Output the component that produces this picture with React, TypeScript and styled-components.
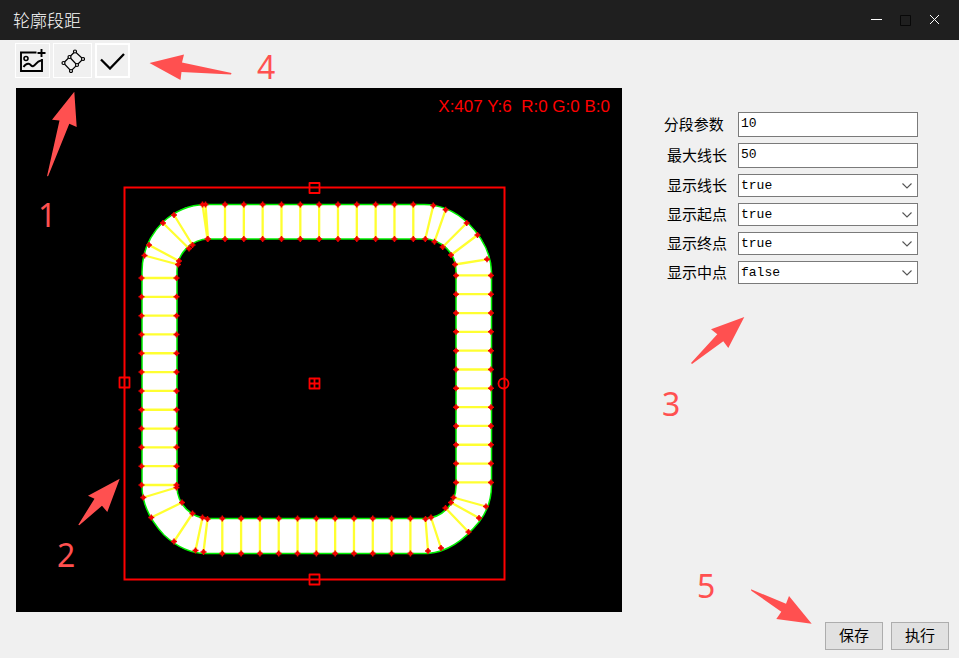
import React from "react";
import styled, { createGlobalStyle } from "styled-components";

const cjk = `"Noto Sans CJK SC", sans-serif`;
const mono = `"Liberation Mono", "Noto Sans CJK SC", monospace`;

const GlobalStyle = createGlobalStyle`
  * { box-sizing: border-box; }
  body { margin: 0; background: #f0f0f0; font-family: ${cjk}; }
`;

const Window = styled.div`
  display: flex;
  flex-direction: column;
  min-height: 100vh;
  background: #f0f0f0;
`;

const TitleBar = styled.header`
  display: flex;
  align-items: center;
  justify-content: space-between;
  height: 40px;
  padding: 0 10px 0 13px;
  background: #1f1f1f;
  color: #fff;
`;

const Title = styled.h1`
  margin: 0;
  font-size: 17px;
  line-height: 24px;
  font-weight: 300;
`;

const WindowButtons = styled.div`
  display: flex;
`;

const WindowButton = styled.button<{ $dim?: boolean }>`
  display: grid;
  place-items: center;
  width: 29px;
  height: 40px;
  padding: 0;
  border: 0;
  background: transparent;
  color: ${(p) => (p.$dim ? "#080808" : "#fff")};
`;

const Toolbar = styled.div`
  position: relative;
  display: flex;
  gap: 3px;
  height: 48px;
  padding: 3px 15px;
`;

const ToolButton = styled.button<{ $wide?: boolean; $active?: boolean }>`
  display: grid;
  place-items: center;
  width: ${(p) => (p.$wide ? 39 : 35)}px;
  height: 35px;
  padding: 0;
  border: ${(p) => (p.$active ? 2 : 1)}px solid #fff;
  background: #f0f0f0;
  color: #000;
`;

const Workspace = styled.main`
  display: grid;
  grid-template-columns: minmax(0, 1fr) 337px;
  flex: 1;
  padding-left: 16px;
`;

const Stage = styled.section`
  position: relative;
  align-self: start;
  background: #000;
`;

const Drawing = styled.svg`
  display: block;
  width: 100%;
  height: auto;
`;

const PixelInfo = styled.output`
  position: absolute;
  top: 8px;
  right: 12px;
  color: #f00;
  font: 17px/22px "Liberation Sans", sans-serif;
  white-space: pre;
`;

const SidePanel = styled.aside`
  position: relative;
  display: flex;
  flex-direction: column;
  justify-content: space-between;
  padding: 24px 10px 8px 16px;
`;

const Form = styled.form`
  display: grid;
  gap: 6px;
  padding-right: 31px;
`;

const Field = styled.div`
  display: grid;
  grid-template-columns: 1fr 180px;
  column-gap: 11px;
  align-items: center;
`;

const Label = styled.label`
  padding-bottom: 2px;
  text-align: right;
  font-size: 15px;
  line-height: 20px;
  white-space: pre;
  color: #000;
`;

const TextBox = styled.input`
  width: 100%;
  height: 25px;
  padding: 0 2px 2px;
  border: 1px solid #7a7a7a;
  background: #fff;
  color: #000;
  font: 13px/20px ${mono};
`;

const SelectBox = styled.div`
  display: grid;
  align-items: center;
  color: #555;
  & > * { grid-area: 1 / 1; }
  & > svg { justify-self: end; margin-right: 6px; pointer-events: none; }
`;

const Select = styled.select`
  appearance: none;
  width: 100%;
  height: 23px;
  padding: 0 20px 0 2px;
  border: 1px solid #7a7a7a;
  border-radius: 0;
  background: #fff;
  color: #000;
  font: 13px/20px ${mono};
`;

const Actions = styled.div`
  display: flex;
  justify-content: flex-end;
  gap: 8px;
`;

const ActionButton = styled.button`
  width: 58px;
  height: 28px;
  padding: 0 0 2px;
  border: 1px solid #adadad;
  background: #e1e1e1;
  color: #000;
  font: 15px/22px ${cjk};
`;

const CalloutSvg = styled.svg<{ $left: number; $top?: number; $bottom?: number }>`
  position: absolute;
  left: ${(p) => p.$left}px;
  ${(p) => (p.$top !== undefined ? `top: ${p.$top}px;` : `bottom: ${p.$bottom}px;`)}
  overflow: visible;
  pointer-events: none;
`;

const Digit = styled.text`
  fill: #ff5050;
  font: 32px "Noto Sans", sans-serif;
`;

type MarkProps = { n: number; x: number; y: number; points: string };

const Mark = ({ n, x, y, points }: MarkProps) => (
  <g>
    <polygon points={points} fill="#ff5050" />
    <Digit x={x} y={y}>{n}</Digit>
  </g>
);

type Segment = [number, number, number, number];

const range = (count: number, start: number, end: number) =>
  Array.from({ length: count }, (_, i) => start + ((end - start) * i) / (count - 1));

const segments: Segment[] = [
  ...range(11, 225, 413.3).map((x): Segment => [x, 204.5, x, 239]),
  ...range(11, 222.3, 410.4).map((x): Segment => [x, 518.5, x, 553.5]),
  ...range(12, 278, 485).map((y): Segment => [141.5, y, 176.5, y]),
  ...range(12, 275.4, 482.4).map((y): Segment => [456, y, 491, y]),
  [202.5, 204.5, 207.5, 239],
  [205.5, 204.5, 208, 239],
  [174, 215, 192.5, 245],
  [163, 223, 189, 248.5],
  [149, 245, 179, 261],
  [144.5, 255.5, 178, 264.5],
  [433.3, 205.5, 425.3, 239],
  [445.7, 209.7, 434.5, 241.7],
  [466.7, 223, 442.7, 247],
  [477.5, 235, 451, 255],
  [487, 259.3, 455, 264.5],
  [143.3, 497.5, 176.5, 487.5],
  [151.3, 517.5, 182, 502.5],
  [174, 541.5, 192.5, 513.5],
  [195.5, 550.5, 202.5, 517.5],
  [203.5, 552, 207.5, 519],
  [428, 551, 425.5, 519],
  [441, 548, 431, 517.5],
  [468.5, 532, 445.5, 508],
  [479, 518, 451, 502.5],
  [486, 506.5, 453.5, 497.5],
];

const crosses = segments
  .flatMap(([x1, y1, x2, y2]) => [[x1, y1], [x2, y2]])
  .map(([x, y]) => `M${x - 3} ${y}h6M${x} ${y - 3}v6M${x - 1} ${y - 1}h2v2h-2z`)
  .join("");

const outerEdge =
  "M205 204.5H424C440 204.5 455 211 468 223C482 237 491 252 491.5 272V485C491.500 500 487 512 479 522C466 538 448 552 428 553.500H206C190 553.500 177 547 164 535C150 520 142 505 142 486V272C142 250 150 235 163 222C175 211 188 205 205 204.500Z";

const Contour = () => (
  <Drawing viewBox="16 88 606 524" role="img" aria-label="轮廓段距">
    <path d={outerEdge} fill="#fff" stroke="#00f000" strokeWidth="1.5" />
    <rect x="177" y="239" width="279" height="279.5" rx="32" fill="#000" stroke="#00f000" strokeWidth="1.5" />
    <path d={segments.map(([a, b, c, d]) => `M${a} ${b}L${c} ${d}`).join("")} stroke="#ffff30" strokeWidth="2.3" />
    <path d={crosses} stroke="#f00000" strokeWidth="1.5" fill="#f00" />
    <g fill="none" stroke="#f00" strokeWidth="2">
      <rect x="124.5" y="187.5" width="380" height="392" />
      <g strokeWidth="1.8" strokeLinejoin="round">
        <rect x="309.5" y="183" width="10" height="10" />
        <rect x="309.5" y="574.5" width="10" height="10" />
        <rect x="119.5" y="377.5" width="10" height="10" />
        <circle cx="503.5" cy="383.5" r="5" />
        <path d="M309.5 378.5h10v10h-10zM314.5 378.5v10M309.5 383.5h10" />
      </g>
    </g>
    <Mark n={1} x={38} y={227} points="74.3,91.7 52,119.7 59.5,120.5 47,176.3 48.2,176 69.3,123.7 76.7,127" />
    <Mark n={2} x={57} y={567} points="119.7,478.7 88,495.7 94.5,498.7 78.3,524.7 79.3,525.3 102,505.7 107.3,512" />
  </Drawing>
);

const ImageIcon = () => (
  <svg width="27" height="25" viewBox="0 0 27 25" fill="none" stroke="currentColor" strokeWidth="1.9">
    <path d="M17.5 4.5H2v18.500h21V11" />
    <path d="M22.500 1v8M18.500 5h8" />
    <circle cx="7" cy="10.500" r="2" strokeWidth="1.600" />
    <path d="M4.500 19c1-1.500 3-3.500 5-3.200 2.500.4 2.500 2.700 4.500 2.400 3-.5 3-5 8-5.700" />
  </svg>
);

const PolygonIcon = () => (
  <svg width="24" height="24" viewBox="0 0 24 24" fill="none" stroke="currentColor" strokeWidth="1.2">
    <path d="M14 2.500l8 7.500-6 6M14 2.500L2.500 14l7.500 8 6-6-7.500-8" />
    <g fill="#f0f0f0">
      <circle cx="14" cy="2.500" r="1.500" />
      <circle cx="22" cy="10" r="1.500" />
      <circle cx="8.500" cy="8" r="1.500" />
      <circle cx="16" cy="16" r="1.500" />
      <circle cx="2.500" cy="14" r="1.500" />
      <circle cx="10" cy="22" r="1.500" />
    </g>
  </svg>
);

const CheckIcon = () => (
  <svg width="25" height="18" viewBox="0 0 25 18" fill="none" stroke="currentColor" strokeWidth="2.3">
    <path d="M1 7.500l9 9L24 2" />
  </svg>
);

const Chevron = () => (
  <svg width="10" height="6" viewBox="0 0 10 6" fill="none" stroke="currentColor" strokeWidth="1.1">
    <path d="M.5.5L5 5 9.500.5" />
  </svg>
);

const textFields = [
  { id: "segments", label: "分段参数 ", value: "10" },
  { id: "maxLength", label: "最大线长", value: "50" },
];

const selectFields = [
  { id: "showLength", label: "显示线长", value: "true" },
  { id: "showStart", label: "显示起点", value: "true" },
  { id: "showEnd", label: "显示终点", value: "true" },
  { id: "showMiddle", label: "显示中点", value: "false" },
];

export default function App() {
  return (
    <Window>
      <GlobalStyle />
      <TitleBar>
        <Title>轮廓段距</Title>
        <WindowButtons>
          <WindowButton aria-label="最小化">
            <svg width="11" height="11" stroke="currentColor"><path d="M0 4.500h11" /></svg>
          </WindowButton>
          <WindowButton aria-label="最大化" $dim>
            <svg width="11" height="11" stroke="currentColor" fill="none"><path d="M.5.5h10v10H.5z" /></svg>
          </WindowButton>
          <WindowButton aria-label="关闭">
            <svg width="11" height="11" stroke="currentColor"><path d="M1 0l9 9M10 0l-9 9" /></svg>
          </WindowButton>
        </WindowButtons>
      </TitleBar>
      <Toolbar>
        <ToolButton aria-label="打开图像"><ImageIcon /></ToolButton>
        <ToolButton aria-label="绘制区域" $wide><PolygonIcon /></ToolButton>
        <ToolButton aria-label="确认" $active><CheckIcon /></ToolButton>
        <CalloutSvg $left={148} $top={0} width="140" height="48" viewBox="148 40 140 48">
          <Mark n={4} x={257} y={79} points="149.5,63 184,54.5 182,62.5 231.5,73 231,74.5 181.5,72 180.5,80" />
        </CalloutSvg>
      </Toolbar>
      <Workspace>
        <Stage>
          <Contour />
          <PixelInfo>{"X:407 Y:6  R:0 G:0 B:0"}</PixelInfo>
        </Stage>
        <SidePanel>
          <Form>
            {textFields.map((f) => (
              <Field key={f.id}>
                <Label htmlFor={f.id}>{f.label}</Label>
                <TextBox id={f.id} defaultValue={f.value} />
              </Field>
            ))}
            {selectFields.map((f) => (
              <Field key={f.id}>
                <Label htmlFor={f.id}>{f.label}</Label>
                <SelectBox>
                  <Select id={f.id} defaultValue={f.value}>
                    <option>true</option>
                    <option>false</option>
                  </Select>
                  <Chevron />
                </SelectBox>
              </Field>
            ))}
          </Form>
          <Actions>
            <ActionButton type="button">保存</ActionButton>
            <ActionButton type="button">执行</ActionButton>
          </Actions>
          <CalloutSvg $left={38} $top={222} width="90" height="120" viewBox="660 310 90 120">
            <Mark n={3} x={662} y={416} points="744.3,317 711,329.3 717.3,334.3 691,363 692,364 723.3,341.3 728.3,348" />
          </CalloutSvg>
          <CalloutSvg $left={73} $bottom={28} width="120" height="70" viewBox="695 560 120 70">
            <Mark n={5} x={697} y={598} points="811.7,623.7 789,596 786,603.7 751,589.3 751.3,590.7 781.3,611.7 776.3,619" />
          </CalloutSvg>
        </SidePanel>
      </Workspace>
    </Window>
  );
}
